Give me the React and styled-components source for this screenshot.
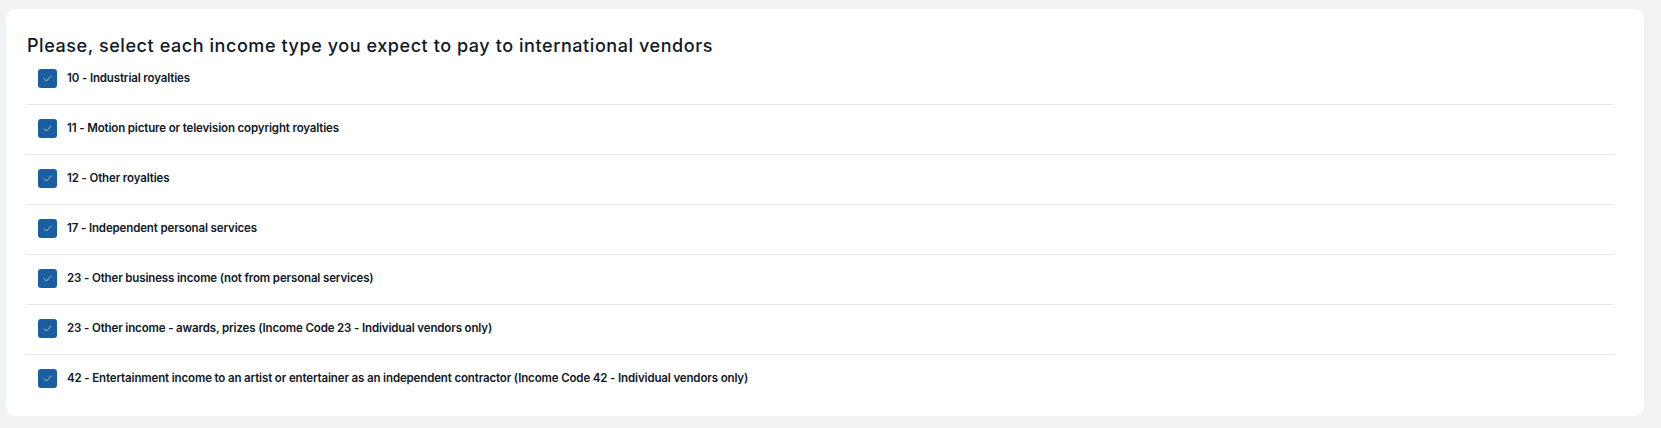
import React from "react";
import styled, { createGlobalStyle } from "styled-components";

const GlobalStyle = createGlobalStyle`
  body {
    margin: 0;
    background: #f2f3f5;
    font-family: "Inter", "Open Sans", sans-serif;
  }
`;

const incomeTypes = [
  "10 - Industrial royalties",
  "11 - Motion picture or television copyright royalties",
  "12 - Other royalties",
  "17 - Independent personal services",
  "23 - Other business income (not from personal services)",
  "23 - Other income - awards, prizes (Income Code 23 - Individual vendors only)",
  "42 - Entertainment income to an artist or entertainer as an independent contractor (Income Code 42 - Individual vendors only)",
];

export default function App() {
  return (
    <Page>
      <GlobalStyle />
      <Card>
        <Title>Please, select each income type you expect to pay to international vendors</Title>
        <List>
          {incomeTypes.map((label, i) => (
            <Row key={i} last={i === incomeTypes.length - 1}>
              <Box>
                <svg width="9" height="7" viewBox="0 0 9 7" fill="none">
                  <polyline
                    points="1,3.6 3.4,6 8,1"
                    stroke="#b8cde4"
                    strokeWidth="0.9"
                    strokeLinecap="round"
                    strokeLinejoin="round"
                  />
                </svg>
              </Box>
              <Label>{label}</Label>
            </Row>
          ))}
        </List>
      </Card>
    </Page>
  );
}

const Page = styled.div`
  padding: 9px 17px 14px 6px;
`;

const Card = styled.div`
  background: #ffffff;
  border-radius: 10px;
  padding: 27px 30px 11px 20px;
`;

const Title = styled.h2`
  margin: 0;
  font-size: 18px;
  line-height: 19px;
  font-weight: 500;
  letter-spacing: 0.57px;
  color: #0f1825;
  padding-left: 1px;
`;

const List = styled.div`
  display: flex;
  flex-direction: column;
`;

const Row = styled.label`
  display: flex;
  align-items: center;
  gap: 10px;
  padding: 14px 0 16px 12px;
  border-bottom: ${(p) => (p.last ? "none" : "1px solid #e6e7e9")};
  padding-bottom: ${(p) => (p.last ? "17px" : "16px")};
`;

const Box = styled.span`
  width: 19px;
  height: 19px;
  border-radius: 3px;
  background: #1b5e9f;
  display: flex;
  align-items: center;
  justify-content: center;
  flex-shrink: 0;
`;

const Label = styled.span`
  font-size: 11.5px;
  line-height: 19px;
  font-weight: 600;
  letter-spacing: -0.14px;
  color: #0f1825;
`;
